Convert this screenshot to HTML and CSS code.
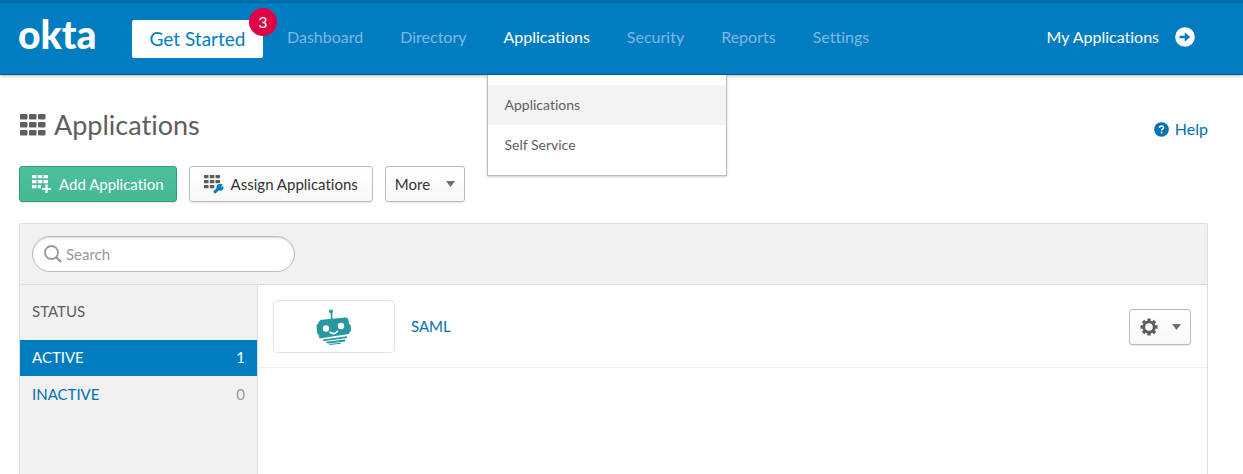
FILE: index.html
```html
<!DOCTYPE html>
<html lang="en">
<head>
<meta charset="utf-8">
<title>Applications</title>
<link rel="stylesheet" href="styles.css">
</head>
<body>
<header class="topbar">
  <a class="logo" href="#">okta</a>
  <a class="get-started" href="#">Get Started<span class="badge">3</span></a>
  <nav class="nav">
    <a href="#">Dashboard</a>
    <a href="#">Directory</a>
    <div class="nav-group">
      <a class="current" href="#">Applications</a>
      <div class="submenu">
        <a class="selected" href="#">Applications</a>
        <a href="#">Self Service</a>
      </div>
    </div>
    <a href="#">Security</a>
    <a href="#">Reports</a>
    <a href="#">Settings</a>
  </nav>
  <a class="my-apps" href="#">My Applications
    <svg width="20" height="20" viewBox="0 0 20 20"><circle cx="10" cy="10" r="9.8" fill="#fff"/><path d="M4.5 8.7h5.2V5.2L15.2 10l-5.5 4.8v-3.5H4.5z" fill="#007dc1"/></svg>
  </a>
</header>
<main class="page">
  <div class="title-row">
    <h1>
      <svg width="26" height="22" viewBox="0 0 26 22" fill="#5e5e5e"><rect width="7.5" height="5.5" rx="1"/><rect x="9" width="7.5" height="5.5" rx="1"/><rect x="18" width="7.5" height="5.5" rx="1"/><rect y="8" width="7.5" height="5.5" rx="1"/><rect x="9" y="8" width="7.5" height="5.5" rx="1"/><rect x="18" y="8" width="7.5" height="5.5" rx="1"/><rect y="16" width="7.5" height="5.5" rx="1"/><rect x="9" y="16" width="7.5" height="5.5" rx="1"/><rect x="18" y="16" width="7.5" height="5.5" rx="1"/></svg>
      Applications
    </h1>
    <a class="help" href="#">
      <svg width="15" height="15" viewBox="0 0 15 15"><circle cx="7.5" cy="7.5" r="7.3" fill="#0072b1"/><path d="M5.5 6q0-2 2-2t2 1.7q0 .9-1 1.4-.9.5-.9 1.4" fill="none" stroke="#fff" stroke-width="1.5"/><rect x="6.8" y="9.7" width="1.6" height="1.6" fill="#fff"/></svg>
      Help
    </a>
  </div>
  <div class="actions">
    <button class="btn btn-green" type="button">
      <svg width="20" height="18" viewBox="0 0 20 18" fill="#fff"><path d="M0 0h4.5v3.3H0zM5.8 0h4.5v3.3H5.8zM11.5 0H16v3.3h-4.5zM0 5h4.5v3.3H0zM5.8 5h4.5v3.3H5.8zM11.5 5H16v3.3h-4.5zM0 10h4.5v3.3H0zM5.8 10H9v3.3H5.8zM13.4 9.5h2.2v3.4H19v2.2h-3.4v3.4h-2.2v-3.4H10v-2.2h3.4z"/></svg>
      Add Application
    </button>
    <button class="btn btn-assign" type="button">
      <svg width="20" height="19" viewBox="0 0 20 19"><path d="M0 0h4.5v3.3H0zM5.8 0h4.5v3.3H5.8zM11.5 0H16v3.3h-4.5zM0 5h4.5v3.3H0zM5.8 5h4.5v3.3H5.8zM11.5 5H16v3.3h-4.5zM0 10h4.5v3.3H0zM5.8 10h4.5v3.3H5.8z" fill="#5e5e5e"/><path d="M11 17.5l4-4.2" stroke="#fff" stroke-width="5"/><circle cx="16" cy="12.3" r="4.4" fill="#fff"/><path d="M11 16.8l4-3.8" stroke="#007dc1" stroke-width="3" stroke-linecap="round"/><circle cx="16" cy="12.3" r="3.5" fill="#007dc1"/><path d="M16.8 11.8l3.2-3.5.5 3z" fill="#fff"/></svg>
      Assign Applications
    </button>
    <button class="btn btn-menu" type="button">More
      <svg width="9" height="6" viewBox="0 0 9 6"><path d="M0 0h9L4.5 6z" fill="#6e6e6e"/></svg>
    </button>
  </div>
  <section class="panel">
    <div class="panel-head">
      <label class="search">
        <svg width="18" height="18" viewBox="0 0 18 18" fill="none" stroke="#999" stroke-width="1.8"><circle cx="7.5" cy="7.5" r="6.5"/><path d="M12 12l5 5" stroke-width="2.4"/></svg>
        <input type="search" placeholder="Search" aria-label="Search">
      </label>
    </div>
    <div class="panel-body">
      <aside class="filters">
        <h2>STATUS</h2>
        <a class="active" href="#"><span>ACTIVE</span><span>1</span></a>
        <a href="#"><span>INACTIVE</span><span class="count">0</span></a>
      </aside>
      <div class="list">
        <div class="app">
          <div class="app-logo">
            <svg width="36" height="36" viewBox="0 0 36 36" fill="#26989f"><path d="M13 2.2q0-1.7 2-1.7t2 1.8q0 1-.7 2l.3 7-1.6.2-.4-7q-1.6-.8-1.6-2.3z"/><path d="M2.5 14Q3 11 6 10.8L29 8.5q2.500-.3 3.200 1.500.8 3 .8 5l1.700 1 .3 6-1.600 1.500L33 25 3.500 29.500 2.800 26 1.300 24.700.5 16.500z"/><path d="M7 30.600l24-3.300v1.700L7.200 32.300zM9 33l20-2.400v1.800L12 34.600zM13 35l12-1.200v1L14 36z"/><circle cx="10" cy="19.5" r="3.2" fill="#fff"/><circle cx="25" cy="17" r="3.2" fill="#fff"/><path d="M13.500 23q5 3.800 8.500-1.200" stroke="#fff" stroke-width="1.6" fill="none"/></svg>
          </div>
          <a class="app-name" href="#">SAML</a>
          <button class="btn btn-gear" type="button" aria-label="Application settings">
            <svg width="18" height="18" viewBox="-9 -9 18 18"><g fill="none" stroke="#5e5e5e"><circle r="5.2" stroke-width="2.8"/><path d="M0-8.5V-6M0 8.5V6M-8.5 0H-6M8.5 0H6M-6-6l1.7 1.7M6 6L4.3 4.3M-6 6l1.7-1.7M6-6L4.3-4.3" stroke-width="3.4"/></g></svg>
            <svg width="9" height="6" viewBox="0 0 9 6"><path d="M0 0h9L4.5 6z" fill="#6e6e6e"/></svg>
          </button>
        </div>
      </div>
    </div>
  </section>
</main>
</body>
</html>
```
FILE: styles.css
```css
* { box-sizing: border-box; }
html, body { height: 100%; }
body {
  margin: 0;
  display: flex;
  flex-direction: column;
  overflow: hidden;
  background: #fff;
  color: #5e5e5e;
  font: 16px/20px Lato, "Liberation Sans", sans-serif;
  font-variant-ligatures: none;
}
a { color: #0072b1; text-decoration: none; }
svg { display: block; flex: none; }
h1, h2 { margin: 0; font-weight: 400; }

.topbar {
  display: flex;
  align-items: center;
  flex: none;
  height: 75px;
  padding: 0 48px 4px 18px;
  background: #007dc1;
  border-top: 3px solid #006ba6;
  border-bottom: 1px solid #005f96;
  box-shadow: 0 1px 3px rgba(0, 0, 0, .3);
}
.logo {
  width: 114px;
  padding-bottom: 6px;
  color: #fff;
  font-size: 39px;
  font-weight: 900;
  line-height: 44px;
}
.get-started {
  position: relative;
  width: 131px;
  margin-top: 4px;
  background: #fff;
  border-radius: 2px;
  color: #007dc1;
  font-size: 19px;
  line-height: 38px;
  text-align: center;
}
.badge {
  position: absolute;
  top: -12px;
  right: -14px;
  width: 28px;
  border-radius: 50%;
  background: #e00145;
  color: #fff;
  font-size: 16px;
  line-height: 28px;
}
.nav { display: flex; gap: 37px; margin-left: 24px; }
.nav > a { color: #7fb9e3; }
.nav-group { position: relative; }
.nav-group .current { color: #fff; }
.submenu {
  position: absolute;
  top: 48px;
  left: -17px;
  width: 240px;
  padding: 10px 0;
  background: #fff;
  border: 1px solid #bbb;
  border-top: 0;
  box-shadow: 0 1px 2px rgba(0, 0, 0, .2);
}
.submenu a {
  display: block;
  padding: 0 17px;
  color: #5e5e5e;
  font-size: 14px;
  line-height: 40px;
}
.submenu .selected { background: #f3f3f3; }
.my-apps { display: flex; align-items: center; gap: 16px; margin-left: auto; color: #fff; }

.page { display: flex; flex-direction: column; flex: 1; padding: 32px 35px 0 19px; }
.title-row { display: flex; align-items: center; justify-content: space-between; }
h1 { display: flex; align-items: center; gap: 8px; padding-left: 1px; font-size: 27px; line-height: 36px; }
.help { display: flex; align-items: center; gap: 6px; padding-top: 8px; }

.actions { display: flex; gap: 12px; margin-top: 23px; }
.btn {
  display: flex;
  align-items: center;
  gap: 7px;
  height: 36px;
  padding: 0 12px;
  background: linear-gradient(#fff, #f8f8f8);
  border: 1px solid #bbb;
  border-radius: 3px;
  box-shadow: 0 1px 1px rgba(0, 0, 0, .1);
  color: #333;
  font: 15px/20px Lato, "Liberation Sans", sans-serif;
  font-variant-ligatures: none;
}
.btn-green { background: linear-gradient(#4cbf9c, #46b894); border-color: #2f9e78; color: #fff; }
.btn-assign { padding: 0 14px; }
.btn-menu { gap: 16px; padding: 0 9px; }

.panel {
  display: flex;
  flex-direction: column;
  flex: 1;
  margin-top: 21px;
  border: 1px solid #ddd;
  border-bottom: 0;
  border-radius: 3px 3px 0 0;
}
.panel-head { padding: 12px; background: #f1f1f1; border-bottom: 1px solid #ddd; }
.search {
  display: flex;
  align-items: center;
  gap: 4px;
  width: 263px;
  height: 36px;
  padding: 0 11px;
  background: #fff;
  border: 1px solid #bbb;
  border-radius: 18px;
  box-shadow: inset 0 1px 2px rgba(0, 0, 0, .15);
}
.search input {
  flex: 1;
  min-width: 0;
  padding: 0;
  border: 0;
  outline: 0;
  background: none;
  font: 15px/20px Lato, "Liberation Sans", sans-serif;
}
.search input::placeholder { color: #999; opacity: 1; }
.panel-body { display: flex; flex: 1; }
.filters { width: 238px; background: #f1f1f1; border-right: 1px solid #ddd; }
.filters h2 { padding: 16px 12px 19px; font-size: 15px; line-height: 20px; }
.filters a {
  display: flex;
  justify-content: space-between;
  padding: 7px 12px 9px;
  font-size: 15px;
  line-height: 20px;
}
.filters .active { background: #007dc1; color: #fff; margin-bottom: 1px; }
.count { color: #999; }
.list { flex: 1; }
.app { display: flex; align-items: center; padding: 15px 16px 14px 15px; border-bottom: 1px solid #eee; }
.app-logo {
  display: flex;
  align-items: center;
  justify-content: center;
  width: 122px;
  height: 53px;
  border: 1px solid #e3e3e3;
  border-radius: 4px;
}
.app-name { margin-left: 16px; padding-bottom: 2px; font-size: 15px; }
.btn-gear { gap: 14px; padding: 0 9px 0 10px; margin-left: auto; }
```
